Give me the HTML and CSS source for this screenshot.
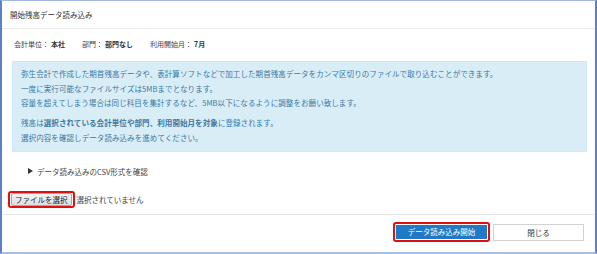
FILE: index.html
```html
<!DOCTYPE html>
<html lang="ja">
<head>
<meta charset="utf-8">
<title>開始残高データ読み込み</title>
<link rel="stylesheet" href="styles.css">
</head>
<body>
<div class="frame">
  <div class="header"><span class="title">開始残高データ読み込み</span></div>
  <div class="content">
    <div class="meta">
      <span class="item">会計単位：<b>本社</b></span>
      <span class="item">部門：<b>部門なし</b></span>
      <span class="item">利用開始月：<b>7月</b></span>
    </div>
    <div class="info">
      <p>弥生会計で作成した期首残高データや、表計算ソフトなどで加工した期首残高データをカンマ区切りのファイルで取り込むことができます。<br>一度に実行可能なファイルサイズは5MBまでとなります。<br>容量を超えてしまう場合は同じ科目を集計するなど、5MB以下になるように調整をお願い致します。</p>
      <p>残高は<b>選択されている会計単位や部門、利用開始月を対象</b>に登録されます。<br>選択内容を確認しデータ読み込みを進めてください。</p>
    </div>
    <div class="csv"><span class="tri"></span><span>データ読み込みのCSV形式を確認</span></div>
    <div class="file">
      <span class="hl"><span class="filebtn">ファイルを選択</span></span>
      <span class="nofile">選択されていません</span>
    </div>
  </div>
  <div class="footer">
    <span class="hl hl-primary"><span class="btn-primary">データ読み込み開始</span></span>
    <span class="btn-close">閉じる</span>
  </div>
</div>
</body>
</html>
```
FILE: styles.css
```css
html, body {
  margin: 0;
  padding: 0;
  background: #ffffff;
}
body {
  font-family: "Noto Sans CJK JP", "Noto Sans", sans-serif;
  color: #333333;
}
.frame {
  box-sizing: border-box;
  width: 597px;
  height: 254px;
  border-left: 2px solid #5b7fc9;
  border-right: 2px solid #5b7fc9;
  border-top: 1px solid #a3b7df;
  border-bottom: 2px solid #a7bde6;
  display: flex;
  flex-direction: column;
  background: #fff;
}
.header {
  height: 27px;
  border-bottom: 1px solid #ececec;
  padding-left: 8px;
  display: flex;
  align-items: center;
}
.title {
  font-size: 7.5px;
  line-height: 10px;
  color: #333;
}
.content {
  padding-top: 9px;
  padding-bottom: 6px;
  border-bottom: 1px solid #e8e8e8;
}
.meta {
  margin-left: 12px;
  font-size: 7px;
  line-height: 13px;
  height: 13px;
  display: flex;
  gap: 17px;
  color: #444;
}
.meta b {
  font-weight: bold;
  color: #333;
  margin-left: 2px;
}
.info {
  margin: 10px 8px 0 10px;
  background: #d9edf7;
  border: 1px solid #cfe8f3;
  padding: 5px 8px 6px 8px;
  color: #3a78a3;
  font-size: 7.5px;
  line-height: 14.5px;
  letter-spacing: 0.08px;
}
.info p {
  margin: 0;
  white-space: nowrap;
}
.info p + p {
  margin-top: 5.5px;
}
.info b {
  font-weight: bold;
}
.csv {
  margin-top: 12px;
  margin-left: 26px;
  height: 14px;
  display: flex;
  align-items: center;
  gap: 4px;
  font-size: 7.5px;
  color: #444;
}
.tri {
  width: 0;
  height: 0;
  border-left: 5px solid #333;
  border-top: 3px solid transparent;
  border-bottom: 3px solid transparent;
}
.file {
  margin-top: 13px;
  margin-left: 6px;
  height: 17px;
  display: flex;
  align-items: center;
  gap: 2px;
}
.hl {
  box-sizing: border-box;
  display: inline-flex;
  align-items: center;
  border: 2px solid #e01010;
  border-radius: 3px;
  padding: 0 1px;
  height: 17px;
}
.filebtn {
  box-sizing: border-box;
  height: 13px;
  padding: 0 3px;
  background: linear-gradient(#f4f4f4, #dedede);
  border: 1px solid #a8a8a8;
  border-radius: 2px;
  font-size: 7.5px;
  line-height: 11px;
  color: #222;
  white-space: nowrap;
}
.nofile {
  font-size: 7.5px;
  color: #444;
}
.footer {
  padding-top: 7px;
  padding-right: 11px;
  display: flex;
  justify-content: flex-end;
  align-items: flex-start;
  gap: 3px;
}
.hl-primary {
  height: 20px;
  padding: 1px;
}
.btn-primary {
  box-sizing: border-box;
  width: 91px;
  height: 14px;
  background: #1f79c6;
  color: #fff;
  font-size: 7.5px;
  line-height: 14px;
  text-align: center;
  white-space: nowrap;
}
.btn-close {
  box-sizing: border-box;
  margin-top: 2px;
  width: 91px;
  height: 17px;
  border: 1px solid #d2d2d2;
  background: #fff;
  color: #333;
  font-size: 7.5px;
  line-height: 15px;
  text-align: center;
}
```
